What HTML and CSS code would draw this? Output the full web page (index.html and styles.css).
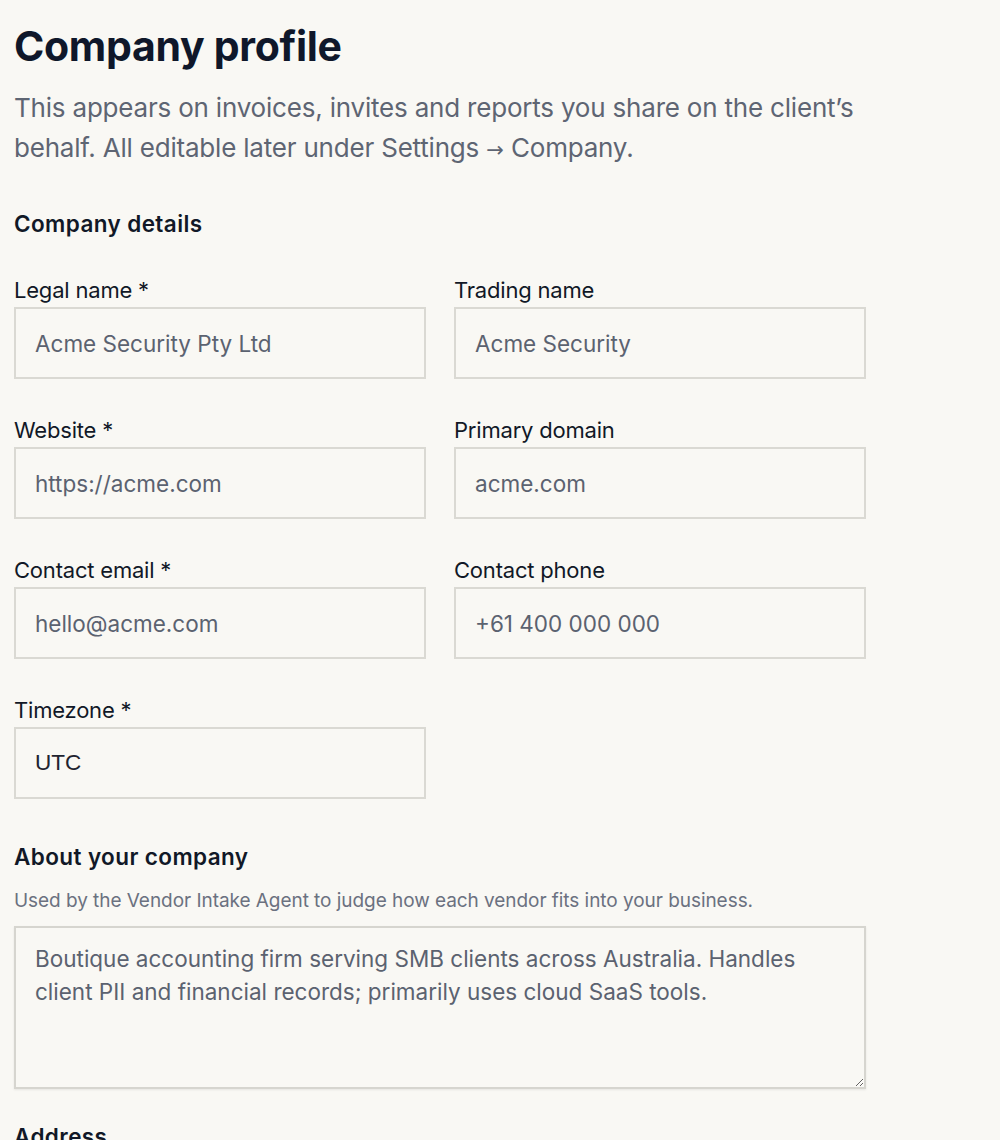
FILE: index.html
```html
<!DOCTYPE html>
<html lang="en">
<head>
<meta charset="utf-8">
<title>Company profile</title>
<link rel="stylesheet" href="styles.css">
</head>
<body>
<main class="page">
  <h1 class="title">Company profile</h1>
  <p class="lead">This appears on invoices, invites and reports you share on the client’s behalf. All editable later under Settings <span class="arrow">→</span> Company.</p>

  <section class="section">
    <h2 class="section-title">Company details</h2>
    <div class="grid">
      <label class="field">
        <span class="label">Legal name *</span>
        <input class="input" type="text" placeholder="Acme Security Pty Ltd">
      </label>
      <label class="field">
        <span class="label">Trading name</span>
        <input class="input" type="text" placeholder="Acme Security">
      </label>
      <label class="field">
        <span class="label">Website *</span>
        <input class="input" type="text" placeholder="https://acme.com">
      </label>
      <label class="field">
        <span class="label">Primary domain</span>
        <input class="input" type="text" placeholder="acme.com">
      </label>
      <label class="field">
        <span class="label">Contact email *</span>
        <input class="input" type="text" placeholder="hello@acme.com">
      </label>
      <label class="field">
        <span class="label">Contact phone</span>
        <input class="input" type="text" placeholder="+61 400 000 000">
      </label>
      <label class="field">
        <span class="label">Timezone *</span>
        <input class="input input-value" type="text" value="UTC">
      </label>
    </div>
  </section>

  <section class="section about">
    <h2 class="section-title">About your company</h2>
    <p class="hint">Used by the Vendor Intake Agent to judge how each vendor fits into your business.</p>
    <textarea class="textarea">Boutique accounting firm serving SMB clients across Australia. Handles client PII and financial records; primarily uses cloud SaaS tools.</textarea>
  </section>

  <section class="section address">
    <h2 class="section-title">Address</h2>
  </section>
</main>
</body>
</html>
```

FILE: styles.css
```css
html, body {
  margin: 0;
  padding: 0;
  background: #f9f8f4;
}

body {
  font-family: Inter, "Noto Sans", "Liberation Sans", sans-serif;
  color: #111827;
}

.page {
  padding: 20px 14px 0 14px;
  width: 852px;
}

.title {
  margin: 0;
  font-size: 41px;
  line-height: 52px;
  font-weight: 700;
  letter-spacing: -0.3px;
  color: #0f172a;
}

.lead {
  margin: 16px 0 0 0;
  font-size: 26px;
  line-height: 40px;
  color: #5e6573;
  letter-spacing: -0.2px;
}

.arrow {
  font-family: "DejaVu Sans", sans-serif;
  font-size: 21px;
  letter-spacing: 0;
}

.section {
  margin-top: 38px;
}

.section-title {
  margin: 0;
  font-size: 22.5px;
  line-height: 32px;
  font-weight: 600;
  color: #111827;
  letter-spacing: 0.4px;
}

.grid {
  margin-top: 35px;
  display: grid;
  grid-template-columns: 412px 412px;
  column-gap: 28px;
  row-gap: 36px;
}

.field {
  display: flex;
  flex-direction: column;
  gap: 2px;
}

.label {
  font-size: 22px;
  line-height: 30px;
  color: #111827;
  letter-spacing: -0.2px;
}

.input {
  box-sizing: border-box;
  width: 412px;
  height: 72px;
  margin: 0;
  padding: 0 19px;
  border: 2px solid #dad9d3;
  background: #f9f8f4;
  font-family: Inter, "Noto Sans", sans-serif;
  font-size: 22.5px;
  color: #5b6270;
  outline: none;
}

.input::placeholder {
  color: #5b6270;
  opacity: 1;
}

.input-value {
  font-family: "Liberation Sans", Arial, sans-serif;
  color: #1f2430;
}

.about {
  margin-top: 42px;
}

.hint {
  margin: 15px 0 0 0;
  font-size: 19px;
  line-height: 26px;
  color: #6b7180;
  letter-spacing: -0.05px;
}

.textarea {
  display: block;
  box-sizing: border-box;
  width: 852px;
  height: 163px;
  margin: 12px 0 0 0;
  padding: 14px 19px;
  border: 2px solid #d6d5cf;
  box-shadow: 0 1px 2px rgba(0, 0, 0, 0.08);
  background: #f9f8f4;
  font-family: Inter, "Noto Sans", sans-serif;
  font-size: 22.5px;
  line-height: 33px;
  color: #5b6270;
  resize: vertical;
  outline: none;
}

.address {
  margin-top: 32px;
}
```
